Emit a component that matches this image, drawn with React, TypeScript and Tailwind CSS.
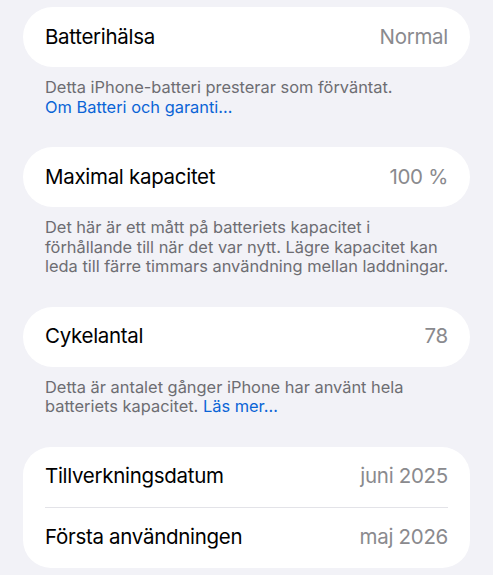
const font = { fontFamily: 'Inter, "Noto Sans", sans-serif' };

function Row({ label, value }: { label: string; value: string }) {
  return (
    <div className="flex h-[60px] items-center justify-between px-[22px]">
      <span className="text-[20.5px] tracking-[-0.3px] text-black">{label}</span>
      <span className="text-[20.5px] tracking-[-0.3px] text-[#8a8a8e]">{value}</span>
    </div>
  );
}

function Footer({ children }: { children: React.ReactNode }) {
  return (
    <p className="pl-[22px] pr-[6px] pt-[11px] pb-[30px] text-[16.4px] leading-[19.5px] text-[#6d6d72]">
      {children}
    </p>
  );
}

export default function App() {
  return (
    <div className="min-h-screen bg-[#f2f2f7] px-[23px] pt-[7px]" style={font}>
      <div className="rounded-[30px] bg-white">
        <Row label="Batterihälsa" value="Normal" />
      </div>
      <Footer>
        Detta iPhone-batteri presterar som förväntat.
        <br />
        <span className="text-[#0a64d6]">Om Batteri och garanti…</span>
      </Footer>

      <div className="rounded-[30px] bg-white">
        <Row label="Maximal kapacitet" value="100 %" />
      </div>
      <Footer>
        Det här är ett mått på batteriets kapacitet i
        <br />
        förhållande till när det var nytt. Lägre kapacitet kan
        <br />
        leda till färre timmars användning mellan laddningar.
      </Footer>

      <div className="rounded-[30px] bg-white">
        <Row label="Cykelantal" value="78" />
      </div>
      <Footer>
        Detta är antalet gånger iPhone har använt hela
        <br />
        batteriets kapacitet. <span className="text-[#0a64d6]">Läs mer…</span>
      </Footer>

      <div className="rounded-[28px] bg-white">
        <Row label="Tillverkningsdatum" value="juni 2025" />
        <div className="mx-[22px] h-px bg-[#e3e3e8]" />
        <Row label="Första användningen" value="maj 2026" />
      </div>
    </div>
  );
}
